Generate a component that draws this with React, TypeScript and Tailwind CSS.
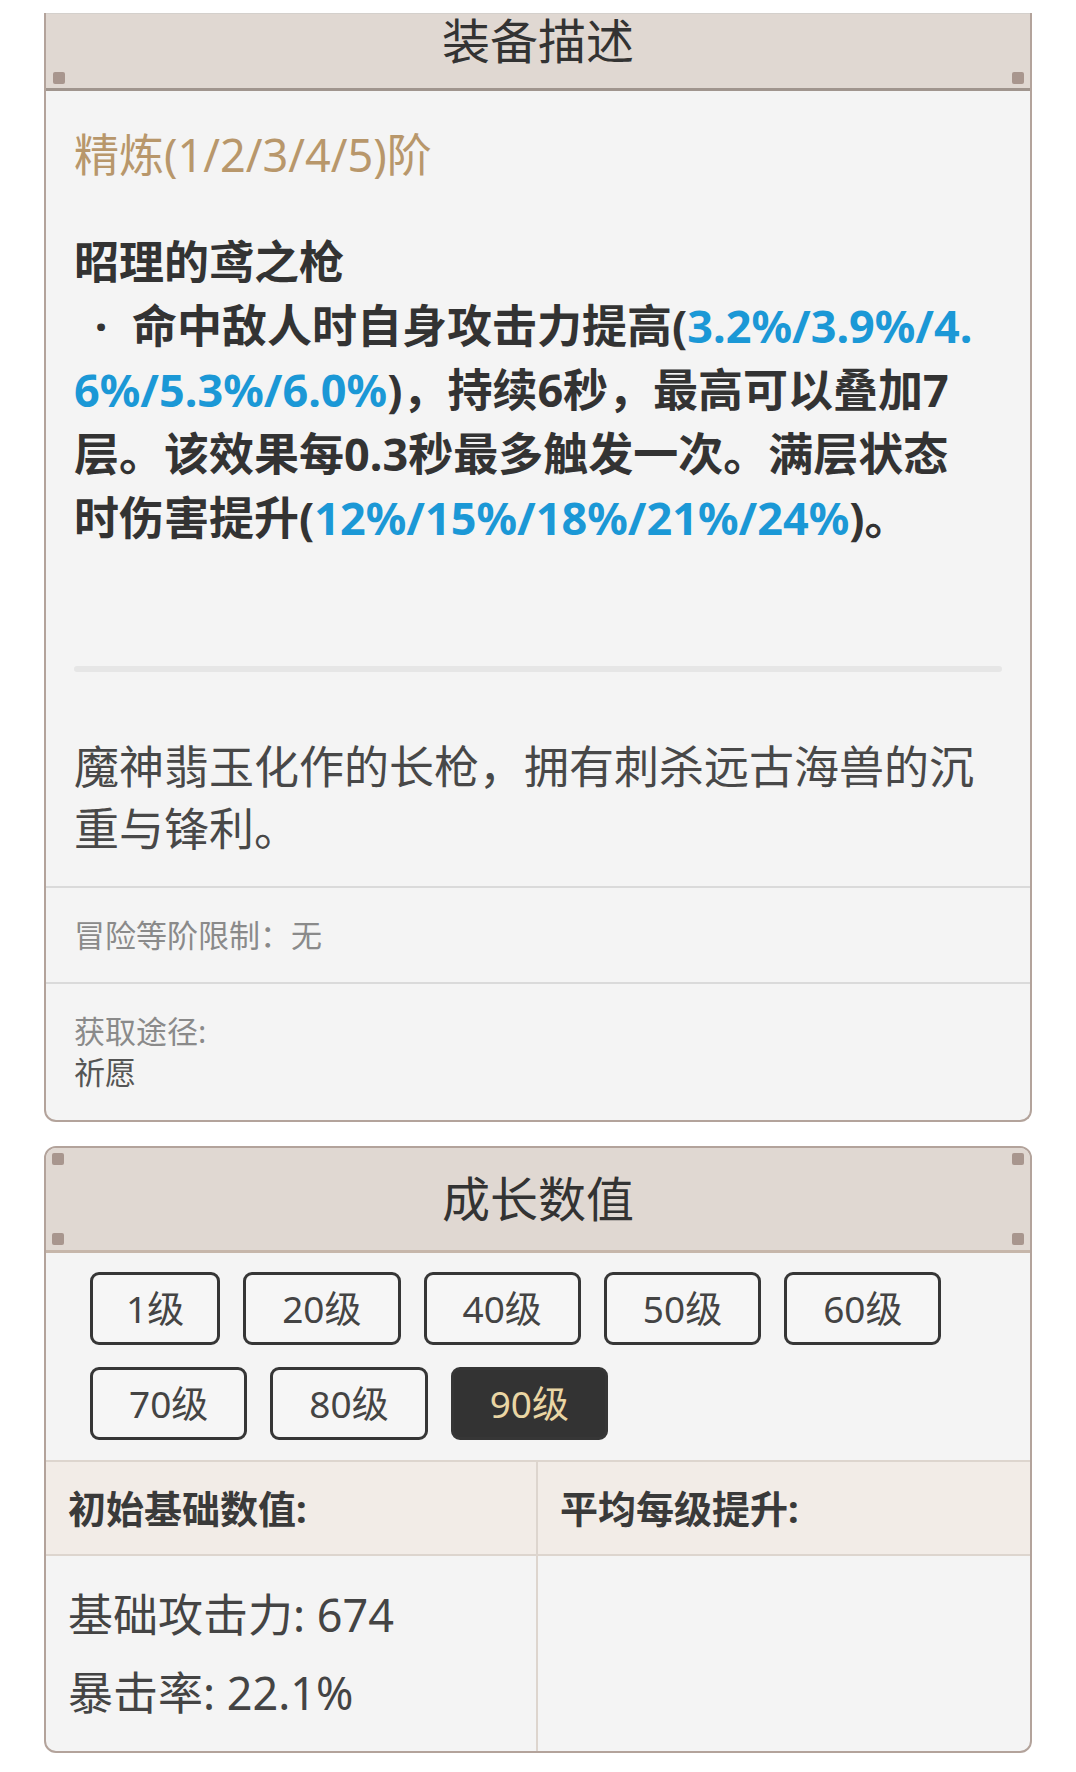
import React from 'react';

const levels = ['1级', '20级', '40级', '50级', '60级', '70级', '80级', '90级'];

function Corner({ className }: { className: string }) {
  return <span className={`absolute w-[12px] h-[12px] rounded-[2px] bg-[#a8968e] ${className}`} />;
}

export default function App() {
  const active = '90级';

  return (
    <div className="min-h-screen bg-white pt-[13px] pb-[19px] font-['Noto_Sans','Noto_Sans_CJK_SC',sans-serif] text-[#333]">
      {/* 装备描述 */}
      <div className="mx-[44px] border-x-2 border-b-2 border-[#b3a39b] rounded-b-[12px] bg-[#f4f4f4] overflow-hidden">
        <div className="relative h-[78px] bg-[#e0d8d2] border-t border-t-[#d4d0cc] border-b-[3px] border-b-[#a0958e]">
          <div className="text-center text-[48px] leading-[54px] text-[#333]">装备描述</div>
          <Corner className="left-[7px] bottom-[4px]" />
          <Corner className="right-[6px] bottom-[4px]" />
        </div>

        <div className="px-[28px] pt-[32px]">
          <div className="text-[45px] leading-[64px] text-[#b8976b]">精炼(1/2/3/4/5)阶</div>
          <div className="mt-[43px] text-[45px] leading-[64px] font-bold text-[#333]">
            昭理的鸢之枪
            <br />
            <span className="inline-block w-[58px] pr-[4px] text-center">·</span>命中敌人时自身攻击力提高(
            <span className="text-[#1b98d6]">3.2%/3.9%/4.</span>
            <br />
            <span className="text-[#1b98d6]">6%/5.3%/6.0%</span>)，持续6秒，最高可以叠加7
            <br />
            层。该效果每0.3秒最多触发一次。满层状态
            <br />
            时伤害提升(<span className="text-[#1b98d6]">12%/15%/18%/21%/24%</span>)。
          </div>

          <div className="mt-[116px] h-[6px] rounded-full bg-[#e6e6e6]" />

          <div className="mt-[64px] text-[45px] leading-[62px] text-[#484848]">
            魔神翡玉化作的长枪，拥有刺杀远古海兽的沉重与锋利。
          </div>
        </div>

        <div className="mt-[26px] border-t-2 border-[#dadada] h-[96px] flex items-center px-[28px] text-[31px] text-[#8a8a8a]">
          冒险等阶限制：无
        </div>

        <div className="border-t-2 border-[#dadada] px-[28px] pt-[27px] pb-[27px] text-[31px] leading-[41px]">
          <div className="text-[#8a8a8a]">获取途径:</div>
          <div className="text-[#555]">祈愿</div>
        </div>
      </div>

      {/* 成长数值 */}
      <div className="mx-[44px] mt-[24px] border-2 border-[#b3a39b] rounded-[12px] bg-[#f4f4f4] overflow-hidden">
        <div className="relative h-[105px] flex items-center justify-center bg-[#e0d8d2] border-b-[3px] border-b-[#c6b6aa]">
          <span className="text-[48px] leading-none text-[#333]">成长数值</span>
          <Corner className="left-[6px] top-[5px]" />
          <Corner className="right-[6px] top-[5px]" />
          <Corner className="left-[6px] bottom-[5px]" />
          <Corner className="right-[6px] bottom-[5px]" />
        </div>

        <div className="flex flex-wrap gap-x-[23px] gap-y-[22px] pl-[44px] pr-[40px] pt-[19px] pb-[20px]">
          {levels.map((lv) => (
            <button
              key={lv}
              className={`h-[73px] rounded-[9px] border-[3px] border-[#363636] text-[37px] leading-none ${
                lv === '1级' ? 'px-[33px]' : 'px-[36px]'
              } ${lv === active ? 'bg-[#333333] text-[#ead6a4]' : 'bg-[#f6f6f6] text-[#444]'}`}
            >
              {lv}
            </button>
          ))}
        </div>

        <div className="grid grid-cols-2 border-t-2 border-[#ddd5ce]">
          <div className="h-[94px] flex items-center pl-[22px] bg-[#f2ece7] border-r-2 border-b-2 border-[#ddd5ce] text-[38px] font-bold text-[#3a3a3a]">
            初始基础数值:
          </div>
          <div className="h-[94px] flex items-center pl-[22px] bg-[#f2ece7] border-b-2 border-[#ddd5ce] text-[38px] font-bold text-[#3a3a3a]">
            平均每级提升:
          </div>
          <div className="pl-[22px] pt-[20px] pb-[19px] border-r-2 border-[#ddd5ce] text-[45px] leading-[78px] text-[#444]">
            <div>基础攻击力: 674</div>
            <div>暴击率: 22.1%</div>
          </div>
          <div />
        </div>
      </div>
    </div>
  );
}
